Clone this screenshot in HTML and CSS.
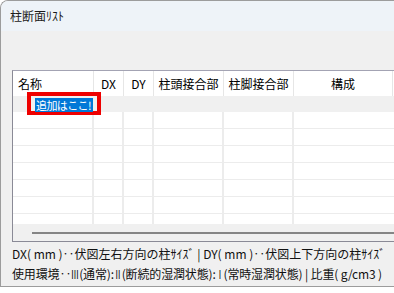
FILE: index.html
```html
<!DOCTYPE html>
<html lang="ja">
<head>
<meta charset="utf-8">
<link rel="stylesheet" href="styles.css">
</head>
<body>
<div class="window">
  <div class="titlebar">柱断面ﾘｽﾄ</div>
  <div class="content">
    <div class="grid">
      <div class="row head">
        <div class="c c1 left">名称</div>
        <div class="c c2">DX</div>
        <div class="c c3">DY</div>
        <div class="c c4">柱頭接合部</div>
        <div class="c c5">柱脚接合部</div>
        <div class="c c6">構成</div>
      </div>
      <div class="row newrow"></div>
      <div class="row data"><div class="c c1"></div><div class="c c2"></div><div class="c c3"></div><div class="c c4"></div><div class="c c5"></div><div class="c c6"></div></div>
      <div class="row data"><div class="c c1"></div><div class="c c2"></div><div class="c c3"></div><div class="c c4"></div><div class="c c5"></div><div class="c c6"></div></div>
      <div class="row data"><div class="c c1"></div><div class="c c2"></div><div class="c c3"></div><div class="c c4"></div><div class="c c5"></div><div class="c c6"></div></div>
      <div class="row data"><div class="c c1"></div><div class="c c2"></div><div class="c c3"></div><div class="c c4"></div><div class="c c5"></div><div class="c c6"></div></div>
      <div class="row data"><div class="c c1"></div><div class="c c2"></div><div class="c c3"></div><div class="c c4"></div><div class="c c5"></div><div class="c c6"></div></div>
      <div class="row data"><div class="c c1"></div><div class="c c2"></div><div class="c c3"></div><div class="c c4"></div><div class="c c5"></div><div class="c c6"></div></div>
      <div class="row data last"><div class="c c1"></div><div class="c c2"></div><div class="c c3"></div><div class="c c4"></div><div class="c c5"></div><div class="c c6"></div></div>
      <div class="hscroll"><div class="thumb"></div></div>
      <div class="callout"><span class="sel">追加はここ!</span></div>
    </div>
    <div class="notes">
      <div class="note">DX( mm )‥伏図左右方向の柱ｻｲｽﾞ | DY( mm )‥伏図上下方向の柱ｻｲｽﾞ</div>
      <div class="note tight">使用環境‥<span class="rn">Ⅲ</span>(通常):<span class="rn">Ⅱ</span>(断続的湿潤状態):<span class="rn">Ⅰ</span>(常時湿潤状態) | 比重( g/cm3 )</div>
    </div>
  </div>
</div>
</body>
</html>
```
FILE: styles.css
```css
html, body {
  margin: 0;
  padding: 0;
  background: #ffffff;
  overflow: hidden;
}
body {
  font-family: "Noto Sans CJK JP", "Noto Sans", sans-serif;
  font-size: 12px;
  color: #000;
}
.window {
  width: 420px;
  height: 287px;
  border: 1px solid #9c9c9c;
  border-right: none;
  border-radius: 8px 0 0 0;
  background: #f0f0f0;
  overflow: hidden;
  box-sizing: border-box;
}
.titlebar {
  height: 30px;
  background: #eef3f8;
  padding-left: 9px;
  line-height: 29px;
  font-size: 12px;
  color: #1a1a1a;
}
.content {
  padding: 39px 0 0 11px;
}
.grid {
  position: relative;
  width: 400px;
  border: 1px solid #8a8a96;
  border-right: none;
  border-top-color: #a3a3b3;
  background: #ffffff;
}
.row {
  display: flex;
}
.c {
  box-sizing: border-box;
  flex: none;
  border-right: 1px solid #e6e6e6;
}
.c1 { width: 81px; }
.c2 { width: 30px; }
.c3 { width: 30px; }
.c4 { width: 70px; }
.c5 { width: 70px; }
.c6 { width: 99px; }
.head {
  height: 25px;
  line-height: 25px;
  background: #fff;
}
.head .c {
  text-align: center;
  white-space: nowrap;
}
.head .left {
  text-align: left;
  padding-left: 5px;
}
.newrow {
  height: 16px;
  background: #f0f0f0;
}
.data {
  height: 17px;
}
.data .c {
  border-bottom: 1px solid #ececec;
  border-right: 2px solid #ececec;
}
.data .c6 { width: 119px; }
.data.last {
  height: 10px;
}
.data.last .c { border-bottom: none; }
.hscroll {
  height: 17px;
  background: #f0f0f0;
  padding: 8px 0 0 19px;
  box-sizing: border-box;
}
.thumb {
  height: 2px;
  background: #858585;
}
.callout {
  position: absolute;
  left: 14px;
  top: 21px;
  width: 74px;
  height: 23px;
  box-sizing: border-box;
  border: 4px solid #ee0000;
  padding: 2px 0 0 4px;
}
.sel {
  display: block;
  width: 58px;
  height: 14px;
  line-height: 14px;
  padding-left: 1px;
  box-sizing: border-box;
  background: #0078d7;
  color: #ffffff;
  font-size: 11px;
  letter-spacing: -0.6px;
  white-space: nowrap;
  overflow: hidden;
}
.notes {
  padding: 1px 0 0 0;
}
.note {
  height: 22px;
  line-height: 22px;
  white-space: nowrap;
  color: #111;
}
.note.tight {
  height: 20px;
  line-height: 18px;
  letter-spacing: -0.15px;
}
.rn {
  display: inline-block;
  transform: scaleX(0.7);
  margin: 0 -2px;
}
```
